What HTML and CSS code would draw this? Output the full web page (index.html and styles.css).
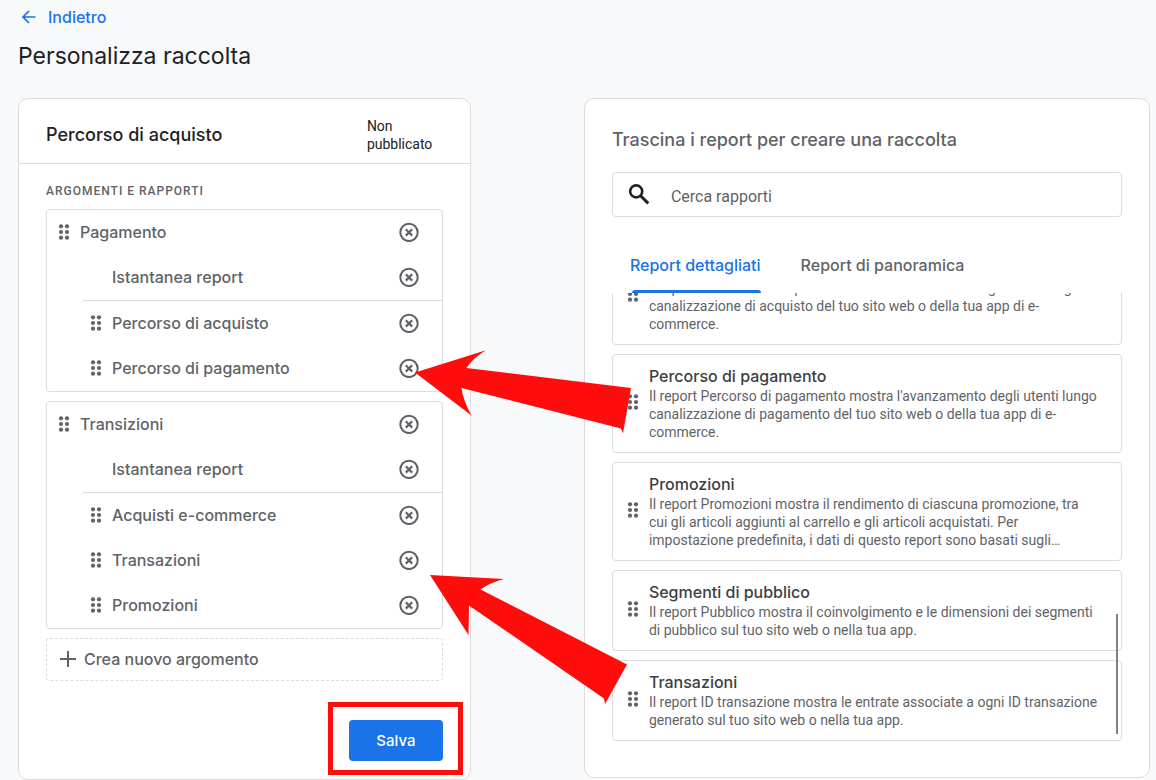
FILE: index.html
```html
<!DOCTYPE html>
<html lang="it">
<head>
  <meta charset="UTF-8">
  <meta name="viewport" content="width=device-width, initial-scale=1.0">
  <title>Personalizza raccolta</title>
  <link rel="stylesheet" href="styles.css">
</head>
<body>

  <!-- Icone riutilizzate -->
  <svg class="sprite" aria-hidden="true">
    <symbol id="drag" viewBox="0 0 12 16">
      <circle cx="3" cy="2.3" r="2.1"/><circle cx="9" cy="2.3" r="2.1"/>
      <circle cx="3" cy="8" r="2.1"/><circle cx="9" cy="8" r="2.1"/>
      <circle cx="3" cy="13.7" r="2.1"/><circle cx="9" cy="13.7" r="2.1"/>
    </symbol>
    <symbol id="remove" viewBox="0 0 20 20">
      <circle cx="10" cy="10.4" r="8.7" fill="none" stroke="currentColor" stroke-width="2"/>
      <path d="M6.8 7.2l6.4 6.4M13.2 7.2l-6.4 6.4" fill="none" stroke="currentColor" stroke-width="2.2"/>
    </symbol>
  </svg>

  <header class="page-header">
    <a class="back" href="#">
      <svg width="14" height="14" viewBox="0 0 14 14"><path d="M13.5 7H1.5M7 1L1 7l6 6" fill="none" stroke="currentColor" stroke-width="1.7"/></svg>
      Indietro
    </a>
    <h1>Personalizza raccolta</h1>
  </header>

  <main class="columns">

    <!-- Raccolta -->
    <section class="card">
      <div class="collection-header">
        <h2>Percorso di acquisto</h2>
        <span class="status">Non pubblicato</span>
      </div>
      <div class="collection-body">
        <h3>Argomenti e rapporti</h3>

        <ul class="topic">
          <li class="row topic-name"><svg class="drag"><use href="#drag"/></svg><span>Pagamento</span><button class="remove" aria-label="Rimuovi Pagamento"><svg><use href="#remove"/></svg></button></li>
          <li class="row overview"><span>Istantanea report</span><button class="remove" aria-label="Rimuovi Istantanea report"><svg><use href="#remove"/></svg></button></li>
          <li class="row"><svg class="drag"><use href="#drag"/></svg><span>Percorso di acquisto</span><button class="remove" aria-label="Rimuovi Percorso di acquisto"><svg><use href="#remove"/></svg></button></li>
          <li class="row"><svg class="drag"><use href="#drag"/></svg><span>Percorso di pagamento</span><button class="remove" aria-label="Rimuovi Percorso di pagamento"><svg><use href="#remove"/></svg></button></li>
        </ul>

        <ul class="topic">
          <li class="row topic-name"><svg class="drag"><use href="#drag"/></svg><span>Transizioni</span><button class="remove" aria-label="Rimuovi Transizioni"><svg><use href="#remove"/></svg></button></li>
          <li class="row overview"><span>Istantanea report</span><button class="remove" aria-label="Rimuovi Istantanea report"><svg><use href="#remove"/></svg></button></li>
          <li class="row"><svg class="drag"><use href="#drag"/></svg><span>Acquisti e-commerce</span><button class="remove" aria-label="Rimuovi Acquisti e-commerce"><svg><use href="#remove"/></svg></button></li>
          <li class="row"><svg class="drag"><use href="#drag"/></svg><span>Transazioni</span><button class="remove" aria-label="Rimuovi Transazioni"><svg><use href="#remove"/></svg></button></li>
          <li class="row"><svg class="drag"><use href="#drag"/></svg><span>Promozioni</span><button class="remove" aria-label="Rimuovi Promozioni"><svg><use href="#remove"/></svg></button></li>
        </ul>

        <button class="new-topic">
          <svg width="16" height="16" viewBox="0 0 16 16"><path d="M8 0v16M0 8h16" stroke="currentColor" stroke-width="2"/></svg>
          Crea nuovo argomento
        </button>
      </div>
      <div class="actions">
        <div class="highlight"><button class="save">Salva</button></div>
      </div>
    </section>

    <!-- Report disponibili -->
    <section class="card library">
      <h2>Trascina i report per creare una raccolta</h2>
      <label class="search">
        <svg width="22" height="22" viewBox="0 0 22 22"><circle cx="8.2" cy="7.4" r="6" fill="none" stroke="currentColor" stroke-width="2.6"/><path d="M12.6 11.8l7.6 7.6" stroke="currentColor" stroke-width="3"/></svg>
        <input type="text" placeholder="Cerca rapporti" aria-label="Cerca rapporti">
      </label>
      <nav class="tabs">
        <button class="tab active">Report dettagliati</button>
        <button class="tab">Report di panoramica</button>
      </nav>
      <div class="reports">
        <article class="report">
          <svg class="drag"><use href="#drag"/></svg>
          <div>
            <h4>Percorso di acquisto</h4>
            <p>Il report Percorso di acquisto mostra l'avanzamento degli utenti lungo canalizzazione di acquisto del tuo sito web o della tua app di e-commerce.</p>
          </div>
        </article>
        <article class="report">
          <svg class="drag"><use href="#drag"/></svg>
          <div>
            <h4>Percorso di pagamento</h4>
            <p>Il report Percorso di pagamento mostra l'avanzamento degli utenti lungo canalizzazione di pagamento del tuo sito web o della tua app di e-commerce.</p>
          </div>
        </article>
        <article class="report">
          <svg class="drag"><use href="#drag"/></svg>
          <div>
            <h4>Promozioni</h4>
            <p>Il report Promozioni mostra il rendimento di ciascuna promozione, tra cui gli articoli aggiunti al carrello e gli articoli acquistati. Per impostazione predefinita, i dati di questo report sono basati sugli…</p>
          </div>
        </article>
        <article class="report">
          <svg class="drag"><use href="#drag"/></svg>
          <div>
            <h4>Segmenti di pubblico</h4>
            <p>Il report Pubblico mostra il coinvolgimento e le dimensioni dei segmenti di pubblico sul tuo sito web o nella tua app.</p>
          </div>
        </article>
        <article class="report">
          <svg class="drag"><use href="#drag"/></svg>
          <div>
            <h4>Transazioni</h4>
            <p>Il report ID transazione mostra le entrate associate a ogni ID transazione generato sul tuo sito web o nella tua app.</p>
          </div>
        </article>
        <div class="thumb"></div>
      </div>
    </section>
  </main>

  <!-- Frecce dai report alla raccolta -->
  <svg class="arrows" width="660" height="720" viewBox="0 0 660 720" aria-hidden="true">
    <path d="M415 372.5L486 350.3Q473 358 466.5 368L631 388L623 433.5L621 428.5L461.5 388Q463 400 471.5 415.5Z"/>
    <path d="M430 575L504 579Q489 583 480.5 589.5L627 664.5L605 704L604 698.5L469 605.5L468.5 635Z"/>
  </svg>

</body>
</html>
```
FILE: styles.css
```css
* {
  box-sizing: border-box;
}

body {
  margin: 0;
  padding: 0 6px 0 18px;
  background-color: #f8f9fb;
  color: #202124;
  font-family: Roboto, Arial, sans-serif;
  font-size: 14px;
  line-height: 18px;
}

h1, h2, h3, h4, p, ul {
  margin: 0;
  padding: 0;
}

h1, h2, h4, .back, .row, .new-topic, .tab, .save {
  font-family: Inter, sans-serif;
}

button {
  border: 0;
  padding: 0;
  background: none;
  color: inherit;
  cursor: pointer;
}

.sprite {
  position: absolute;
  width: 0;
  height: 0;
}

/* Intestazione */
.page-header {
  padding-top: 7px;
  height: 98px;
}

.back {
  display: inline-flex;
  align-items: center;
  gap: 12px;
  padding-left: 4px;
  color: #1a73e8;
  font-size: 16px;
  font-weight: 500;
  line-height: 20px;
  text-decoration: none;
}

h1 {
  margin-top: 12px;
  font-size: 23px;
  font-weight: 400;
  line-height: 32px;
}

/* Colonne */
.columns {
  display: grid;
  grid-template-columns: 4fr 5fr;
  gap: 113px;
  align-items: start;
}

.card {
  border: 1px solid #dadce0;
  border-radius: 10px;
  background-color: #fff;
}

.collection-header {
  display: flex;
  align-items: center;
  justify-content: space-between;
  height: 65px;
  padding: 8px 27px 0;
  border-bottom: 1px solid #dadce0;
}

.collection-header h2 {
  font-size: 18px;
  font-weight: 500;
}

.status {
  width: 76px;
}

.collection-body {
  display: flex;
  flex-direction: column;
  gap: 9px;
  padding: 18px 27px 0;
}

h3 {
  color: #5f6368;
  font-size: 12px;
  font-weight: 500;
  letter-spacing: 1px;
  text-transform: uppercase;
}

.topic {
  border: 1px solid #dadce0;
  border-radius: 4px;
  list-style: none;
}

.row {
  display: flex;
  align-items: center;
  gap: 10px;
  height: 45px;
  padding: 0 23px 1px 43px;
  color: #5f6368;
  font-size: 16px;
  font-weight: 500;
}

.row span {
  flex: 1;
}

.topic-name {
  padding-left: 11px;
}

.overview {
  height: 46px;
  margin-left: 36px;
  padding-left: 29px;
  border-bottom: 1px solid #dadce0;
}

.drag {
  flex: none;
  width: 12px;
  height: 16px;
  fill: #5f6368;
}

.remove, .remove svg {
  display: block;
  width: 20px;
  height: 20px;
}

.new-topic {
  display: flex;
  align-items: center;
  gap: 8px;
  height: 43px;
  padding: 0 13px 1px;
  border: 1px dashed #dadce0;
  border-radius: 4px;
  color: #5f6368;
  font-size: 16px;
  font-weight: 500;
}

.actions {
  display: flex;
  justify-content: flex-end;
  padding: 21px 7px 4px;
}

.highlight {
  padding: 13px 15px 9px 16px;
  border: 5px solid #ff0d0d;
}

.save {
  display: block;
  width: 94px;
  height: 41px;
  border-radius: 4px;
  background-color: #1a73e8;
  color: #fff;
  font-size: 15px;
  font-weight: 500;
}

/* Elenco report */
.library {
  padding: 31px 27px 36px;
}

.library h2 {
  color: #5f6368;
  font-size: 18px;
  font-weight: 500;
  line-height: 20px;
}

.search {
  display: flex;
  align-items: center;
  gap: 21px;
  height: 45px;
  margin-top: 22px;
  padding: 0 15px;
  border: 1px solid #dadce0;
  border-radius: 4px;
}

.search input {
  flex: 1;
  border: 0;
  padding: 3px 0 0;
  outline: none;
  background: none;
  font-family: inherit;
  font-size: 16px;
}

.search input::placeholder {
  color: #5f6368;
}

.tabs {
  display: flex;
  gap: 40px;
  height: 76px;
  padding: 20px 18px 0;
}

.tab {
  position: relative;
  color: #5f6368;
  font-size: 16px;
  font-weight: 500;
}

.tab.active {
  color: #1a73e8;
}

.tab.active::after {
  content: "";
  position: absolute;
  left: 2px;
  right: 0;
  bottom: 0;
  height: 3px;
  border-radius: 3px 3px 0 0;
  background-color: #1a73e8;
}

.reports {
  position: relative;
  display: flex;
  flex-direction: column;
  justify-content: flex-end;
  gap: 9px;
  height: 448px;
  overflow: hidden;
}

.report {
  display: flex;
  flex: none;
  align-items: center;
  gap: 10px;
  padding: 10px 22px 11px 14px;
  border: 1px solid #dadce0;
  border-radius: 4px;
}

.report .drag {
  margin-bottom: 3px;
}

h4 {
  color: #3c4043;
  font-size: 16px;
  font-weight: 500;
  line-height: 22px;
}

.report p {
  color: #5f6368;
}

.thumb {
  position: absolute;
  right: 4px;
  bottom: 7px;
  width: 2px;
  height: 120px;
  background-color: #808285;
}

/* Frecce */
.arrows {
  position: absolute;
  left: 0;
  top: 0;
  fill: #ff0d0d;
  pointer-events: none;
}
```
